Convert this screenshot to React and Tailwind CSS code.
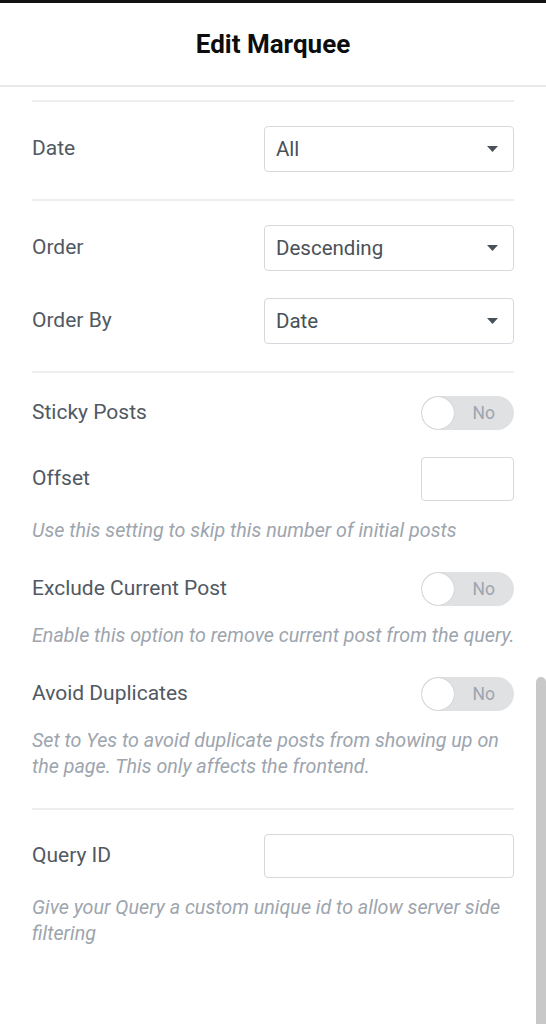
import React from 'react';

const Caret = () => (
    <svg width="11" height="6" viewBox="0 0 11 6" className="shrink-0">
        <path d="M0 0 H11 L5.5 6 Z" fill="#495157" />
    </svg>
);

const SelectRow = ({ label, value, className = '' }) => (
    <div className={`flex items-center justify-between h-[46px] ${className}`}>
        <span className="text-[21px] text-[#515962]">{label}</span>
        <div className="w-[250px] h-[46px] border border-[#d5d8dc] rounded-[4px] flex items-center justify-between pl-[11px] pr-[15px]">
            <span className="text-[20.5px] text-[#495157]">{value}</span>
            <Caret />
        </div>
    </div>
);

const ToggleRow = ({ label, className = '' }) => (
    <div className={`flex items-center justify-between h-[34px] ${className}`}>
        <span className="text-[21px] text-[#515962]">{label}</span>
        <div className="w-[93px] h-[34px] rounded-full bg-[#e0e1e3] flex items-center justify-between pl-[1px] pr-[19px]">
            <div className="w-[32px] h-[32px] rounded-full bg-white shadow-[0_0_1px_rgba(0,0,0,0.3)]" />
            <span className="text-[17.5px] text-[#9da5ae]">No</span>
        </div>
    </div>
);

const Help = ({ children, className = '' }) => (
    <p className={`text-[19.7px] leading-[26px] italic text-[#9da5ae] ${className}`}>{children}</p>
);

const Divider = ({ className = '' }) => <div className={`h-[2px] bg-[#eceeef] ${className}`} />;

export default function App() {
    return (
        <div className="w-full h-[1024px] bg-white overflow-hidden relative" style={{ fontFamily: 'Roboto, "Liberation Sans", sans-serif' }}>
            <div className="h-[3px] bg-[#111214]" />
            <div className="h-[84px] border-b-2 border-[#e8e9ea] flex items-center justify-center">
                <h1 className="text-[26px] font-bold text-[#0c0d0e]">Edit Marquee</h1>
            </div>

            <div className="h-[931px] px-[32px]">
                <Divider className="mt-[13px]" />
                <SelectRow label="Date" value="All" className="mt-[24px]" />
                <Divider className="mt-[27px]" />
                <SelectRow label="Order" value="Descending" className="mt-[24px]" />
                <SelectRow label="Order By" value="Date" className="mt-[27px]" />
                <Divider className="mt-[27px]" />

                <ToggleRow label="Sticky Posts" className="mt-[23px]" />
                <div className="flex items-center justify-between h-[44px] mt-[27px]">
                    <span className="text-[21px] text-[#515962]">Offset</span>
                    <div className="w-[93px] h-[44px] border border-[#d5d8dc] rounded-[4px]" />
                </div>
                <Help className="mt-[17px]">Use this setting to skip this number of initial posts</Help>

                <ToggleRow label="Exclude Current Post" className="mt-[28px]" />
                <Help className="mt-[17px] whitespace-nowrap">Enable this option to remove current post from the query.</Help>

                <ToggleRow label="Avoid Duplicates" className="mt-[28px]" />
                <Help className="mt-[17px]">Set to Yes to avoid duplicate posts from showing up on the page. This only affects the frontend.</Help>

                <Divider className="mt-[28px]" />
                <div className="flex items-center justify-between h-[44px] mt-[24px]">
                    <span className="text-[21px] text-[#515962]">Query ID</span>
                    <div className="w-[250px] h-[44px] border border-[#d5d8dc] rounded-[4px]" />
                </div>
                <Help className="mt-[17px]">Give your Query a custom unique id to allow server side filtering</Help>
            </div>

            <div className="h-[4px] bg-[#e8e9ea]" />

            {/* scrollbar thumb */}
            <div className="absolute right-0 top-[677px] w-[10px] h-[347px] bg-[#c8c8c8] rounded-t-full" />
        </div>
    );
}
